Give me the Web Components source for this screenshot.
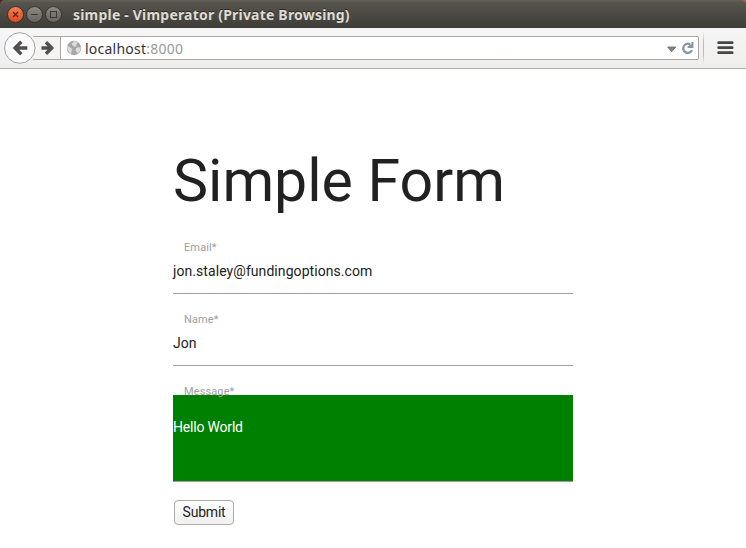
<!DOCTYPE html>
<html lang="en">
<head>
<meta charset="utf-8">
<title>simple</title>
<style>
body{margin:0;width:746px;height:548px;overflow:hidden;background:#fff;font-family:Roboto,"Liberation Sans",sans-serif}
</style>
</head>
<body>
<browser-window>
  <title-bar slot="title">simple - Vimperator (Private Browsing)</title-bar>
  <nav-bar slot="nav"><span>localhost</span><span slot="port">:8000</span></nav-bar>
  <simple-form heading="Simple Form">
    <form-field label="Email*" style="letter-spacing:.07px">jon.staley@fundingoptions.com</form-field>
    <form-field label="Name*">Jon</form-field>
    <form-field label="Message*" area style="letter-spacing:-.19px">Hello World</form-field>
    <submit-button slot="action">Submit</submit-button>
  </simple-form>
</browser-window>
<script>
const define = (name, html, setup) => customElements.define(name, class extends HTMLElement {
  constructor() {
    super();
    this.attachShadow({mode: 'open'}).innerHTML = html;
  }
  connectedCallback() { if (setup) setup(this, this.shadowRoot); }
});

define('browser-window', `
<style>:host{display:flex;flex-direction:column;width:746px;height:548px;background:#fff}</style>
<slot name="title"></slot><slot name="nav"></slot><slot></slot>`);

define('title-bar', `
<style>
:host{display:flex;flex:none;align-items:center;height:28px;box-sizing:border-box;padding-left:6px;gap:11px;
 background:linear-gradient(#5d5a52 0,#65625a 1px,#58554d 2px,#3e3d38 28px);color:#dfdbd2;position:relative}
.corner{position:absolute;top:0;width:4px;height:4px}
.l{left:0;background:radial-gradient(circle at 100% 100%,transparent 3.5px,#57221c 4px)}
.r{right:0;background:radial-gradient(circle at 0 100%,transparent 3.5px,#b4694a 4px)}
svg{display:block;flex:none}
.t{font:bold 14px/28px "Noto Sans","Open Sans",sans-serif;letter-spacing:.2px;white-space:nowrap;text-shadow:0 -1px 0 #2b2a27;padding-top:1px}
</style>
<i class="corner l"></i><i class="corner r"></i>
<svg width="56" height="20" viewBox="0 0 56 20">
 <defs><linearGradient id="o" x2="0" y2="1"><stop stop-color="#f58058"/><stop offset="1" stop-color="#df4a1b"/></linearGradient>
 <linearGradient id="g" x2="0" y2="1"><stop stop-color="#8c8a83"/><stop offset="1" stop-color="#66645d"/></linearGradient></defs>
 <g stroke="#33312c"><circle cx="9.5" cy="10.5" r="8" fill="url(#o)"/><circle cx="28.5" cy="10.5" r="8" fill="url(#g)"/><circle cx="47.5" cy="10.5" r="8" fill="url(#g)"/></g>
 <g fill="none" stroke="#3a3833" stroke-width="1.1"><path stroke="#63240f" stroke-width="1.3" d="M7 8l5 5M12 8l-5 5"/><path d="M25 10.5h7M44.5 7.5h6v6h-6z"/></g>
</svg>
<span class="t"><slot></slot></span>`);

define('nav-bar', `
<style>
:host{display:flex;flex:none;box-sizing:border-box;height:41px;padding:0 12px 0 3px;align-items:center;
 background:linear-gradient(#f7f6f6,#efeeed);border-bottom:1px solid #b3b0ac}
svg{display:block;flex:none}
.url{display:flex;align-items:center;box-sizing:border-box;width:639px;height:24px;border:1px solid #aaa7a3;
 border-radius:0 2px 2px 0;background:#fff;padding:0 3px 0 5px}
.txt{flex:1;font:14px/22px "Noto Sans","Open Sans",sans-serif;letter-spacing:.24px;color:#333;white-space:nowrap;margin-left:3px;padding-top:1px}
.port{color:#999}
.sep{width:1px;height:32px;margin:0 13px 0 4px;background:linear-gradient(transparent,#b4bbc2 30%,#b4bbc2 70%,transparent)}
</style>
<svg width="57" height="40" viewBox="0 0 57 40">
 <path d="M30 8.5H57V31.5H30z" fill="#f5f4f3"/><path d="M30 8.5H57M30 31.5H57" stroke="#aaa7a3"/>
 <circle cx="16.8" cy="20" r="15.3" fill="#fafafa" stroke="#9aa5b4"/>
 <g fill="none" stroke="#505050" stroke-width="3.4"><path d="M24.300 20H13M18.300 13.800L12.100 20l6.200 6.200"/><path d="M38.500 20h9.500M43 14.300L48.700 20 43 25.700"/></g>
</svg>
<div class="url">
 <svg width="16" height="16" viewBox="0 0 16 16"><circle cx="8" cy="8" r="7.2" fill="#a6a6a6"/><path fill="#ddd" d="M8.300 1l4 1.800-1.800 1-.2 2-2 1.200L6.800 5.600 5.600 4zM1 6l2.600 1 2.700 2.200-.8 2.300-.4 2.400C2.500 12.500 1 9.500 1 6zM10.500 7.500L14.800 7.200 14 11 11.500 13.200 9.500 10.500z"/></svg>
 <div class="txt"><slot></slot><span class="port"><slot name="port"></slot></span></div>
 <svg width="28" height="14" viewBox="0 0 28 14"><path d="M.7 6h8L4.700 10.700z" fill="#858585" stroke="#666" stroke-width=".8"/>
 <path d="M25 9.300A4.600 4.600 0 1 1 23.300 3.400" fill="none" stroke="#8997a3" stroke-width="2.300"/><path d="M26.500 1v6h-6V5.400L24.500 3V1z" fill="#8997a3"/></svg>
</div>
<i class="sep"></i>
<svg width="17" height="14" viewBox="0 0 17 14"><g fill="#454545"><rect x=".3" y=".2" width="16.200" height="2.800" rx="1.200"/><rect x=".3" y="5.200" width="16.200" height="2.800" rx="1.200"/><rect x=".3" y="10.200" width="16.200" height="2.800" rx="1.200"/></g></svg>`);

define('simple-form', `
<style>
:host{display:flex;flex-direction:column;align-items:flex-start;width:400px;padding:79px 0 0 173px}
h1{margin:0 0 24px;font-weight:400;font-size:59px;line-height:65px;color:#212121;white-space:nowrap}
</style>
<h1></h1><slot></slot><slot name="action"></slot>`,
(el, root) => { root.querySelector('h1').textContent = el.getAttribute('heading'); });

define('form-field', `
<style>
:host{display:flex;flex-direction:column;width:400px;height:72px}
label{box-sizing:border-box;height:14px;padding:3px 0 0 11px;font-size:11px;line-height:16px;letter-spacing:.12px;color:#9e9e9e;position:relative;z-index:1}
div{box-sizing:border-box;height:43px;border-bottom:1px solid #9e9e9e;font-size:14px;line-height:40px;color:#212121;white-space:nowrap}
:host([area]){height:119px}
:host([area]) div{height:87px;background:green;background-clip:padding-box;color:#fff;padding-top:12px}
</style>
<label></label><div><slot></slot></div>`,
(el, root) => { root.querySelector('label').textContent = el.getAttribute('label'); });

define('submit-button', `
<style>
:host{display:block}
button{display:block;box-sizing:border-box;width:60px;height:25px;margin:0 0 0 1px;padding:0 0 1px;border:1px solid #b0aca7;border-radius:4px;
 background:linear-gradient(#fff,#f0efee);font:14px/22px Roboto,"Liberation Sans",sans-serif;letter-spacing:-.2px;color:#212121}
</style>
<button><slot></slot></button>`);
</script>
</body>
</html>
